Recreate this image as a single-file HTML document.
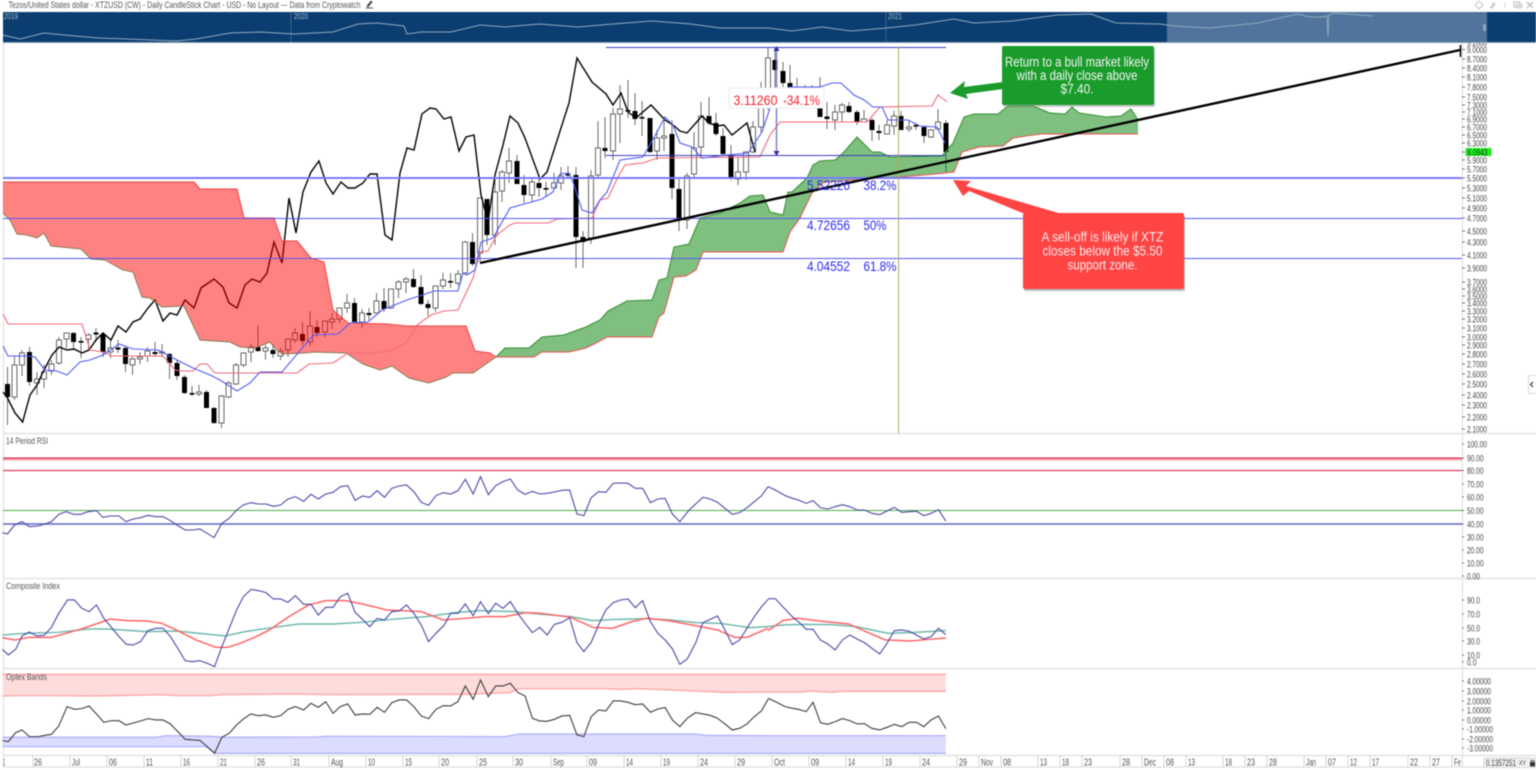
<!DOCTYPE html>
<html><head><meta charset="utf-8"><title>XTZUSD Daily Chart</title>
<style>
html,body{margin:0;padding:0;background:#fff;width:1536px;height:770px;overflow:hidden}
svg{display:block;position:absolute;left:0;top:0;filter:blur(.4px)}
text{font-family:"Liberation Sans",sans-serif}
.z polyline{vector-effect:non-scaling-stroke;fill:none}
.a text{font-size:9.5px;fill:#444}
.d text{font-size:10px;fill:#555}
</style></head><body>
<svg width="1536" height="770" viewBox="0 0 1536 770" xmlns="http://www.w3.org/2000/svg">
<rect width="1536" height="770" fill="#fff"/>
<!-- title -->
<text x="8.5" y="8" font-size="9.5" fill="#555" textLength="352" lengthAdjust="spacingAndGlyphs">Tezos/United States dollar - XTZUSD (CW) - Daily CandleStick Chart - USD - No Layout --- Data from Cryptowatch</text>
<path d="M366 8h7M367 6l4-5 1 1-4 5z" stroke="#555" stroke-width=".9" fill="#333"/>
<!-- window icons -->
<path d="M1479 1l4 4-4 4-4-4z" fill="none" stroke="#c4c4c4"/>
<path d="M1489 8l3-3 1-3 3 2-2 2-2 3-1-1z" fill="#c8c8c8"/>
<path d="M1505 2v6" stroke="#ddd"/>
<path d="M1514 2h6v5h-6z" fill="none" stroke="#c0c0c0"/><path d="M1516 4h6v4h-6z" fill="#ddd" stroke="#c0c0c0" stroke-width=".6"/>
<path d="M1527 2l6 6M1533 2l-6 6" stroke="#bbb" stroke-width="1.3"/>

<!-- borders -->
<path d="M3.5 42V767M1462.5 42V767" stroke="#dcdcdc" stroke-width="1"/>
<path d="M3 433.5H1536M3 578.5H1536M3 668.5H1536M3 755.5H1536M3 767H1536" stroke="#dedede" stroke-width="1.3"/>

<!-- wicks -->
<path fill="none" stroke="#6e6e6e" stroke-width="1" d="M7.5 367V425M14.5 356V400M22 350V376M29.5 347V386M37 372V395M44 365V388M51.5 360V375M59 337V365M66.5 333V348M73.5 332V350M81 337V358M88.5 333V350M96 328V342M103 333V357M110.5 340V358M118 340V353M125.5 347V372M132.5 357V375M140 352V364M147.5 347V362M155 342V357M162 344V357M169.5 353V379M177 360V380M184.5 375V394M192 386V396M199 385V396M206.5 390V408M214 407V424M221.5 395V428M228.5 381V398M236 363V385M243.5 352V367M251 344V362M258 326V352M265.5 345V360M273 344V358M280.5 348V360M288 339V357M295 328V343M302.5 322V345M310 311V346M317 320V337M325 321V337M332 313V329M339.5 308V323M347 294V313M354.5 298V322M362 309V328M369 308V320M376.5 293V313M384 288V312M391 289V309M398.5 280V298M406 277V293M413.5 269V288M421 275V305M428 300V316M435.5 286V312M443 273V289M450.5 273V288M458 270V286M465 241V275M472.5 233V266M480 198V262M487 199V245M495 173V245M502 170V202M509 148V183M517 155V184M524 175V203M532 178V202M539 178V197M546 182V197M554 173V190M561 167V190M568 166V178M576 167V268M583 231V268M591 170V244M598 121V177M605 117V158M613 108V160M620 85V143M628 80V118M635 93V125M642 101V136M650 118V153M657 130V160M664 117V151M672 120V199M679 178V231M687 173V229M694 132V178M701 102V157M709 97V125M716 113V136M723 128V155M731 145V180M738 157V185M746 152V180M753 121V153M761 82V132M768 48V110M775 47V88M783 62V87M790 65V95M797 78V100M805 85V100M812 85V100M820 77V117M827 102V129M835 105V130M842 103V122M849 102V113M857 110V125M864 110V122M872 118V141M879 125V140M887 120V134M894 111V135M901 111V130M909 120V132M916 123V130M924 127V143M931 129V138M938 109V130M946 120V172"/>
<!-- hollow bodies -->
<path fill="#fff" stroke="#666" stroke-width="1" d="M12 365h5V397h-5zM19.5 353h5V365h-5zM34.5 379h5V383h-5zM41.5 372h5V379h-5zM49 364h5V371h-5zM56.5 340h5V363h-5zM64 333h5V339h-5zM86 335h5V339h-5zM108 348h5V352h-5zM130 359h5V365h-5zM137.5 357h5V359h-5zM145 351h5V356h-5zM159.5 352h5V353h-5zM196.5 392h5V394h-5zM219 396h5V423h-5zM226 383h5V397h-5zM233.5 365h5V384h-5zM241 353h5V365h-5zM248.5 347h5V352h-5zM263 348h5V351h-5zM278 351h5V356h-5zM285.5 339h5V350h-5zM292.5 333h5V340h-5zM307.5 326h5V342h-5zM322.5 321h5V332h-5zM329.5 319h5V322h-5zM337 308h5V319h-5zM344.5 303h5V308h-5zM359.5 313h5V322h-5zM374 301h5V313h-5zM388.5 289h5V308h-5zM396 282h5V289h-5zM403.5 279h5V282h-5zM433 286h5V308h-5zM440.5 280h5V286h-5zM455.5 274h5V283h-5zM462.5 242h5V273h-5zM477.5 198h5V253h-5zM492.5 192h5V235h-5zM499.5 172h5V191h-5zM506.5 161h5V173h-5zM529.5 182h5V195h-5zM551.5 183h5V188h-5zM558.5 176h5V183h-5zM588.5 176h5V238h-5zM595.5 148h5V175h-5zM610.5 114h5V151h-5zM617.5 109h5V114h-5zM654.5 138h5V151h-5zM661.5 136h5V138h-5zM684.5 176h5V220h-5zM691.5 148h5V174h-5zM698.5 116h5V147h-5zM735.5 172h5V179h-5zM743.5 152h5V172h-5zM750.5 127h5V152h-5zM758.5 100h5V127h-5zM765.5 58h5V92h-5zM832.5 112h5V120h-5zM839.5 105h5V112h-5zM861.5 119h5V122h-5zM884.5 125h5V134h-5zM891.5 116h5V126h-5zM906.5 127h5V129h-5zM928.5 130h5V137h-5zM935.5 122h5V129h-5z"/>
<!-- filled bodies -->
<path fill="none" stroke="#000" stroke-width="5" d="M7.5 384V397M29.5 352V382M73.5 333V342M96 332.5V334.5M103 334V352M118 347.5V349.5M125.5 348V364M155 352V354M169.5 354V363M177 363V376M184.5 377V393M206.5 392V408M214 408V423M258 347V351M273 350V354M302.5 334V341M317 327V333M354.5 303V322M369 313V315M384 301V309M413.5 279V287M421 287V304M428 304V308M472.5 242V264M487 199V235M517 161V184M524 185V195M539 183V188M576 175V237M583 237V242M635 111V119M650 118V152M672 134V188M679 189V220M709 116V123M716 123V134M723 136V154M731 155V179M775 60V70M783 71V83M790 83V89M820 108V117M849 106V112M857 112V122M872 120V130M901 116V130M924 127V136M946 123V152"/>
<path fill="none" stroke="#000" stroke-width="5" d="M827 116.5V119M879 131V133"/>
<path fill="none" stroke="#000" stroke-width="5" d="M81 341V342.6M192 393V394.6M450.5 281V282.6M605 148V151M628 110V111.6M546 188V189.6M568 174V175.6M642 117V118.6M916 125V126.6"/>

<!-- chikou -->
<polyline fill="none" stroke="#000" stroke-width="1.4" points="3,392 7,397 15,413 22.6,422 30,395 37,385 44,370 52,355 59,347 67,350 74,349 82,353 89,350 96,340 103,333 111,340 118,326 126,332 133,322 140,319 148,308 155,300 163,321 170,313 177,315 185,300 194,308 201,288 214,279 223,287 229,303 237,308 245,285 252,279 260,282 267,273 274,242 282,263 289,198 296,233 303,192 311,172 319,161 326,183 333,194 341,182 348,188 355,188 363,183 370,174 377,174 385,235 392,240 400,173 407,148 414,150 422,114 430,108 436,109 444,119 451,117 459,151 466,137 474,135 481,195 488,222 495,175 503,145 510,116 518,123 525,138 540,179 547,172 569,103 577,58 592,82 606,94 613,105 621,93 628,112 636,118 651,105 665,120 673,125 680,131 687,133 702,116 709,123 717,126 724,125 732,135 747,123 755,152"/>

<!-- red cloud -->
<polygon fill="rgba(255,0,0,.49)" points="3,182 194,182 200,189 237,189 244,218 274,218 282,241 297,241 311,258 324,262 333,310 348,323 387,324 407,326 466,326 475,351 490,353 496,357 473,373 453,373 446,377 429,383 409,378 392,366 380,370 363,364 346,353 314,352 304,353 282,354 275,348 270,342 255,348 240,347 230,342 200,340 184,306 162,307 150,298 142,297 133,272 123,270 105,260 91,259 81,249 51,246 44,233 37,238 27,235 17,234 10,220 3,213"/>
<polyline fill="none" stroke="#f04040" stroke-width="1" points="3,182 194,182 200,189 237,189 244,218 274,218 282,241 297,241 311,258 324,262 333,310 348,323 387,324 407,326 466,326 475,351 490,353 496,357"/>
<polyline fill="none" stroke="#8a7a50" stroke-width="1" points="496,357 473,373 453,373 446,377 429,383 409,378 392,366 380,370 363,364 346,353 314,352 304,353 282,354 275,348 270,342 255,348 240,347 230,342 200,340 184,306 162,307 150,298 142,297 133,272 123,270 105,260 91,259 81,249 51,246 44,233 37,238 27,235 17,234 10,220 3,213"/>
<!-- green cloud -->
<polygon fill="rgba(0,128,0,.5)" points="496,357 505,348 529,348 542,337 564,335 586,327 600,320 608,311 627,301 652,300 659,280 667,278 674,247 689,244 700,218 720,213 740,203 750,196 763,195 770,212 783,215 788,192 792,192 807,178 813,165 820,161 835,160 843,153 857,137 872,152 880,152 890,157 942,156 953,143 964,117 974,114 998,114 1008,106 1033,106 1050,113 1065,114 1072,107 1079,113 1106,117 1121,116 1131,109 1138,120 1138,134 1040,134 1013,138 1003,146 979,147 962,152 954,172 935,174 900,177 824,182 812,193 800,218 790,232 783,252 703,252 696,270 686,276 674,277 664,313 659,317 652,337 607,337 596,343 586,348 569,352 542,352 534,357"/>
<polyline fill="none" stroke="#2f8f2f" stroke-width="1" points="496,357 505,348 529,348 542,337 564,335 586,327 600,320 608,311 627,301 652,300 659,280 667,278 674,247 689,244 700,218 720,213 740,203 750,196 763,195 770,212 783,215 788,192 792,192 807,178 813,165 820,161 835,160 843,153 857,137 872,152 880,152 890,157 942,156 953,143 964,117 974,114 998,114 1008,106 1033,106 1050,113 1065,114 1072,107 1079,113 1106,117 1121,116 1131,109 1138,120"/>
<polyline fill="none" stroke="#f05050" stroke-width="1" points="496,357 534,357 542,352 569,352 586,348 596,343 607,337 652,337 659,317 664,313 674,277 686,276 696,270 703,252 783,252 790,232 800,218 812,193 824,182 900,177 935,174 954,172 962,152 979,147 1003,146 1013,138 1040,134 1138,134"/>

<!-- kijun (red) -->
<polyline fill="none" stroke="#f36a7a" stroke-width="1.1" points="3,314 8,324 82,324 90,350 103,352 112,356 163,356 175,370 183,371 193,371 200,364 207,364 215,373 297,373 309,364 333,363 348,353 377,353 392,350 407,342 417,325 431,315 444,311 458,310 466,293 473,278 480,252 488,251 497,235 510,225 515,223 548,223 557,219 592,218 600,200 608,198 618,177 625,165 643,163 657,158 760,157 770,135 780,122 867,122 880,107 932,106 938,95 947,102"/>
<!-- tenkan (blue) -->
<polyline fill="none" stroke="#4f5cf5" stroke-width="1.1" points="3,346 8,356 27,356 35,357 45,370 57,371 67,375 80,362 90,360 103,355 119,344 133,349 158,350 177,360 193,368 210,375 220,380 237,391 250,383 260,372 282,372 309,340 314,335 338,334 350,323 368,322 382,310 407,300 434,291 458,291 463,273 467,275 475,270 481,242 493,238 510,208 542,199 553,192 560,174 569,173 573,182 582,210 592,213 600,200 607,192 620,160 643,157 657,132 665,117 673,125 680,143 692,147 702,158 727,155 748,153 762,132 770,108 775,92 790,87 820,87 832,83 841,83 854,95 864,100 873,107 882,107 888,120 908,120 920,126 937,127 945,143"/>

<!-- horizontal support levels -->
<path d="M3 178H1462" stroke="#8f8fff" stroke-width="2"/>
<path d="M3 178H1462" stroke="#5a5af5" stroke-width=".7"/>
<path d="M3 218.5H1462M3 258.5H1462" stroke="#5555f5" stroke-width="1.1"/>
<!-- measure -->
<path d="M606 47.5H946M606 155.5H946" stroke="#3d3dc4" stroke-width="1.1"/>
<path d="M776.5 47V155" stroke="#7676cc" stroke-width="1.4"/>
<path d="M776.5 46l-3 5h6zM776.5 156l-3-5h6z" fill="#2c2ca0"/>
<!-- yellow vline -->
<path d="M898.5 47V433" stroke="#b2aa55" stroke-width="1"/>
<!-- trend line -->
<path d="M480 263L1460 50" stroke="#000" stroke-width="2.4"/>
<path d="M1460.5 45V57" stroke="#000" stroke-width="1.6"/>

<!-- measure label -->
<rect x="729" y="88" width="95" height="20" fill="#fff" stroke="#ececec"/>
<text x="733.5" y="105" font-size="13.5" fill="#fb1f2c" textLength="44" lengthAdjust="spacingAndGlyphs">3.11260</text>
<text x="783" y="105" font-size="13.5" fill="#fb1f2c" textLength="37" lengthAdjust="spacingAndGlyphs">-34.1%</text>
<!-- fib labels -->
<g font-size="13.5" fill="#2a2af5">
<text x="807" y="190" textLength="43" lengthAdjust="spacingAndGlyphs">5.52226</text><text x="863.5" y="190" textLength="33" lengthAdjust="spacingAndGlyphs">38.2%</text>
<text x="807" y="230" textLength="43" lengthAdjust="spacingAndGlyphs">4.72656</text><text x="863.5" y="230" textLength="23" lengthAdjust="spacingAndGlyphs">50%</text>
<text x="807" y="271" textLength="43" lengthAdjust="spacingAndGlyphs">4.04552</text><text x="863.5" y="271" textLength="33" lengthAdjust="spacingAndGlyphs">61.8%</text>
</g>

<!-- arrows -->
<polygon fill="#1a9c2b" points="1003,82 964,87 965,81 950,93 968,99 966,94 1003,89"/>
<polygon fill="#ff4444" points="953,180 971,181 966,186 1062,214 1025,214 969,191 963,196"/>
<!-- callouts -->
<rect x="1003" y="48" width="152" height="59" rx="2" fill="#777" opacity=".4"/>
<rect x="1002" y="46" width="152" height="59" rx="2" fill="#1a9c2b"/>
<g font-size="13.5" fill="#f4f4f4" text-anchor="middle">
<text x="1077" y="66.5" textLength="144" lengthAdjust="spacingAndGlyphs">Return to a bull market likely</text>
<text x="1077" y="80" textLength="121" lengthAdjust="spacingAndGlyphs">with a daily close above</text>
<text x="1077" y="93.5" textLength="33" lengthAdjust="spacingAndGlyphs">$7.40.</text>
</g>
<rect x="1024" y="215" width="161" height="76" rx="2" fill="#666" opacity=".45"/>
<rect x="1023" y="213" width="161" height="76" rx="2" fill="#ff4444"/>
<g font-size="13.5" fill="#fbeaea" text-anchor="middle">
<text x="1102.5" y="241.5" textLength="122" lengthAdjust="spacingAndGlyphs">A sell-off is likely if XTZ</text>
<text x="1102.5" y="255.5" textLength="120" lengthAdjust="spacingAndGlyphs">closes below the $5.50</text>
<text x="1102.5" y="269.5" textLength="70" lengthAdjust="spacingAndGlyphs">support zone.</text>
</g>

<!-- RSI -->
<path d="M3 459.5H1462" stroke="#f6a3ae" stroke-width="2"/>
<path d="M3 458H1462M3 470.5H1462" stroke="#e2163c" stroke-width="1.1"/>
<path d="M3 510.5H1462" stroke="#4cae4c" stroke-width="1.1"/>
<path d="M3 524H1462" stroke="#a0a0de" stroke-width="2"/>
<path d="M3 524H1462" stroke="#6262c0" stroke-width=".8"/>
<text x="6" y="444" font-size="9.5" fill="#555" textLength="42" lengthAdjust="spacingAndGlyphs">14 Period RSI</text>
<text x="6" y="589" font-size="9.5" fill="#555" textLength="54" lengthAdjust="spacingAndGlyphs">Composite Index</text>

<!-- Optex fill -->
<g class="z" transform="translate(0 430) scale(.4898 .3333)">
<polygon fill="#ffdcdc" points="5,733 1568,733 1568,786 1480,787 1420,783 1300,776 1270,778 1230,776 1060,776 1040,788 950,793 680,794 600,792 450,794 430,797 360,797 330,794 200,798 100,797 40,797 5,798"/>
<polygon fill="#dcdcff" points="5,922 320,922 340,917 430,919 460,922 640,921 670,919 1030,920 1060,912 1420,912 1440,916 1568,917 1568,970 440,970 420,950 5,950"/>
<polyline stroke="#ffa2a2" stroke-width="1.3" points="5,733 1568,733"/>
<polyline stroke="#ffa2a2" stroke-width="1.3" points="5,798 40,797 100,797 200,798 330,794 360,797 430,797 450,794 600,792 680,794 950,793 1040,788 1060,776 1230,776 1270,778 1300,776 1420,783 1480,787 1568,786"/>
<polyline stroke="#b2b2fa" stroke-width="1.3" points="5,922 320,922 340,917 430,919 460,922 640,921 670,919 1030,920 1060,912 1420,912 1440,916 1568,917"/>
<polyline stroke="#b2b2fa" stroke-width="1.3" points="5,950 420,950 440,970 1568,970"/>

<!-- RSI line -->
<polyline stroke="#4a4aa8" stroke-width="1.1" points="5,308 15,312 30,285 45,275 60,290 78,288 92,282 105,275 120,253 135,245 150,253 165,253 180,245 197,242 210,262 225,258 243,258 257,275 272,267 287,263 302,256 318,260 333,260 348,272 363,287 378,300 393,300 408,297 423,310 437,323 453,280 468,265 483,240 497,225 512,218 527,222 543,222 558,229 573,225 588,207 603,200 620,214 635,193 650,207 665,192 680,187 695,170 710,167 725,211 740,198 755,202 770,182 785,202 800,175 815,168 830,165 845,185 860,217 875,226 890,197 905,188 920,192 935,182 950,148 966,192 981,140 997,194 1012,167 1027,155 1042,147 1057,180 1072,193 1087,184 1102,192 1117,190 1132,186 1147,181 1163,180 1178,252 1192,257 1207,203 1222,185 1237,187 1252,160 1267,159 1282,160 1297,175 1312,175 1328,218 1343,207 1358,205 1373,253 1388,275 1407,240 1435,202 1450,207 1465,217 1480,235 1495,253 1510,248 1525,233 1540,215 1555,197 1568,170"/>
<!-- composite teal -->
<polyline stroke="#6fb8ae" stroke-width="1.5" points="5,615 50,610 120,607 180,597 220,597 300,605 360,603 420,612 460,618 500,605 560,592 610,582 680,582 740,577 800,568 870,560 930,548 980,542 1050,545 1100,552 1165,560 1210,572 1260,568 1320,566 1370,570 1420,578 1470,580 1530,593 1568,590"/>
<!-- composite red -->
<polyline stroke="#ff6464" stroke-width="1.5" points="5,623 30,630 60,622 105,622 135,610 170,595 190,585 225,567 260,572 300,573 330,580 360,600 400,630 440,652 465,652 490,640 520,622 550,600 590,560 630,525 665,512 705,512 740,522 790,540 860,545 905,570 950,565 990,560 1030,560 1075,548 1105,550 1165,562 1210,592 1250,595 1290,575 1320,565 1365,572 1420,587 1465,600 1500,622 1525,622 1568,595"/>
<!-- composite blue -->
<polyline stroke="#4a4aa8" stroke-width="1.1" points="5,658 17,675 32,658 45,618 60,606 75,618 90,616 105,592 120,550 138,510 152,510 167,535 182,545 197,525 212,565 228,593 243,620 258,643 272,645 287,635 302,602 318,595 333,595 348,620 363,655 378,692 393,695 408,692 423,700 438,710 453,650 468,595 483,540 497,500 513,478 528,482 543,488 558,507 573,507 588,517 603,497 620,523 635,523 650,555 665,532 680,532 695,500 710,490 725,547 740,568 755,590 770,565 785,570 800,545 815,543 830,525 845,550 860,585 875,635 890,610 907,585 920,550 935,550 950,522 966,557 981,515 997,551 1012,520 1027,535 1042,515 1057,550 1072,580 1087,608 1102,592 1117,615 1132,583 1147,577 1163,563 1178,638 1192,665 1207,637 1222,585 1237,540 1252,518 1267,510 1282,507 1297,533 1312,512 1328,575 1343,610 1358,630 1373,657 1388,703 1403,687 1420,640 1435,578 1450,568 1465,558 1480,600 1495,644 1510,630 1525,595 1540,560 1555,530 1568,508"/>
<!-- optex black -->
<polyline stroke="#3e3e3e" stroke-width="1.1" points="5,932 17,935 32,908 45,900 60,920 78,920 92,916 105,913 120,888 137,830 152,838 167,836 182,828 197,852 212,877 228,872 243,872 257,885 272,879 287,873 302,866 318,870 333,870 348,882 363,905 378,928 393,930 408,931 423,950 438,970 453,922 468,910 483,885 497,867 512,852 527,857 543,855 558,862 573,857 588,838 603,830 620,840 635,820 650,832 665,815 680,850 695,830 710,822 725,855 740,852 755,853 770,832 785,847 800,818 815,810 830,810 845,830 860,858 875,866 890,838 905,827 920,828 935,815 950,768 966,808 981,750 997,800 1012,768 1027,768 1042,760 1057,787 1072,798 1087,865 1102,873 1117,874 1132,868 1147,858 1163,856 1178,915 1192,920 1207,860 1222,840 1237,843 1252,813 1267,813 1282,817 1297,824 1312,822 1328,847 1343,837 1358,833 1373,870 1388,890 1403,865 1420,848 1435,852 1450,856 1465,865 1480,882 1495,900 1510,895 1525,882 1540,860 1555,842 1568,808"/>
</g>
<g class="z" transform="translate(768 430) scale(.4898 .3333)">
<polygon fill="#ffdcdc" points="0,733 363,733 363,784 150,784 130,787 90,783 70,786 0,786"/>
<polygon fill="#dcdcff" points="0,917 363,917 363,970 0,970"/>
<polyline stroke="#ffa2a2" stroke-width="1.3" points="0,733 363,733"/>
<polyline stroke="#ffa2a2" stroke-width="1.3" points="0,786 70,786 90,783 130,787 150,784 363,784"/>
<polyline stroke="#b2b2fa" stroke-width="1.3" points="0,917 363,917"/>
<polyline stroke="#b2b2fa" stroke-width="1.3" points="0,970 363,970"/>
<polyline stroke="#4a4aa8" stroke-width="1.1" points="0,170 15,180 35,197 50,205 62,210 78,220 92,212 107,233 122,237 137,230 152,224 167,230 182,240 197,240 212,250 228,254 243,243 258,232 273,247 288,245 303,244 318,257 333,250 348,239 363,273"/>
<polyline stroke="#6fb8ae" stroke-width="1.5" points="0,590 30,585 70,583 130,584 180,590 245,610 300,607 363,602"/>
<polyline stroke="#ff6464" stroke-width="1.5" points="0,602 30,572 60,565 105,573 165,582 200,605 240,630 290,633 330,628 363,624"/>
<polyline stroke="#4a4aa8" stroke-width="1.1" points="0,506 15,506 30,530 48,558 62,575 78,598 92,598 107,630 122,642 137,660 152,630 167,615 182,627 197,638 212,655 228,672 243,640 258,602 273,600 288,604 303,615 318,627 333,620 348,595 363,614"/>
<polyline stroke="#3e3e3e" stroke-width="1.1" points="0,805 15,815 35,830 50,835 62,838 78,845 92,817 107,878 122,883 137,875 152,866 167,872 182,882 197,881 212,895 228,900 243,892 258,883 273,890 288,877 303,877 318,890 333,870 348,858 363,896"/>
</g>
<text x="6" y="680" font-size="9.5" fill="#555" textLength="41" lengthAdjust="spacingAndGlyphs">Optex Bands</text>

<!-- axis ticks -->
<path stroke="#777" stroke-width="1" d="M1462 49.5h3M1462 59h3M1462 68h3M1462 77h3M1462 87h3M1462 97h3M1462 105h3M1462 112h3M1462 119h3M1462 127h3M1462 135h3M1462 143h3M1462 152h3M1462 160h3M1462 169h3M1462 178h3M1462 188h3M1462 198h3M1462 208h3M1462 218h3M1462 231h3M1462 242h3M1462 255h3M1462 268h3M1462 282h3M1462 289h3M1462 296h3M1462 303h3M1462 311h3M1462 319h3M1462 328h3M1462 337h3M1462 345h3M1462 354h3M1462 364h3M1462 374h3M1462 384h3M1462 395h3M1462 405h3M1462 417h3M1462 429h3M1462 444h2M1462 458h2M1462 470.5h2M1462 484h2M1462 497h2M1462 510.5h2M1462 524h2M1462 537h2M1462 550h2M1462 563h2M1462 576h2M1462 600h2M1462 614h2M1462 628h2M1462 641h2M1462 655h2M1462 662h2M1462 681h2M1462 691h2M1462 701h2M1462 710h2M1462 720h2M1462 729h2M1462 739h2M1462 748h2"/>
<!-- price labels -->
<g class="a">
<text x="1467" y="46" textLength="20" lengthAdjust="spacingAndGlyphs">9.2000</text>
<text x="1467" y="53" textLength="20" lengthAdjust="spacingAndGlyphs">9.0000</text>
<text x="1467" y="62.5" textLength="20" lengthAdjust="spacingAndGlyphs">8.7000</text>
<text x="1467" y="71.5" textLength="20" lengthAdjust="spacingAndGlyphs">8.4000</text>
<text x="1467" y="80.5" textLength="20" lengthAdjust="spacingAndGlyphs">8.1000</text>
<text x="1467" y="90.5" textLength="20" lengthAdjust="spacingAndGlyphs">7.8000</text>
<text x="1467" y="100.5" textLength="20" lengthAdjust="spacingAndGlyphs">7.5000</text>
<text x="1467" y="108.5" textLength="20" lengthAdjust="spacingAndGlyphs">7.3000</text>
<text x="1467" y="115.5" textLength="20" lengthAdjust="spacingAndGlyphs">7.1000</text>
<text x="1467" y="122.5" textLength="20" lengthAdjust="spacingAndGlyphs">6.9000</text>
<text x="1467" y="130.5" textLength="20" lengthAdjust="spacingAndGlyphs">6.7000</text>
<text x="1467" y="138.5" textLength="20" lengthAdjust="spacingAndGlyphs">6.5000</text>
<text x="1467" y="146.5" textLength="20" lengthAdjust="spacingAndGlyphs">6.3000</text>
<rect x="1465.5" y="148" width="26" height="8" fill="#22ee22"/>
<text x="1467.5" y="155.5" textLength="20" lengthAdjust="spacingAndGlyphs" style="fill:#1a3a1a">6.0943</text>
<text x="1467" y="163.5" textLength="20" lengthAdjust="spacingAndGlyphs">5.9000</text>
<text x="1467" y="172.5" textLength="20" lengthAdjust="spacingAndGlyphs">5.7000</text>
<text x="1467" y="181.5" textLength="20" lengthAdjust="spacingAndGlyphs">5.5000</text>
<text x="1467" y="191.5" textLength="20" lengthAdjust="spacingAndGlyphs">5.3000</text>
<text x="1467" y="201.5" textLength="20" lengthAdjust="spacingAndGlyphs">5.1000</text>
<text x="1467" y="211.5" textLength="20" lengthAdjust="spacingAndGlyphs">4.9000</text>
<text x="1467" y="221.5" textLength="20" lengthAdjust="spacingAndGlyphs">4.7000</text>
<text x="1467" y="234.5" textLength="20" lengthAdjust="spacingAndGlyphs">4.5000</text>
<text x="1467" y="245.5" textLength="20" lengthAdjust="spacingAndGlyphs">4.3000</text>
<text x="1467" y="258.5" textLength="20" lengthAdjust="spacingAndGlyphs">4.1000</text>
<text x="1467" y="271.5" textLength="20" lengthAdjust="spacingAndGlyphs">3.9000</text>
<text x="1467" y="285.5" textLength="20" lengthAdjust="spacingAndGlyphs">3.7000</text>
<text x="1467" y="292.5" textLength="20" lengthAdjust="spacingAndGlyphs">3.6000</text>
<text x="1467" y="299.5" textLength="20" lengthAdjust="spacingAndGlyphs">3.5000</text>
<text x="1467" y="306.5" textLength="20" lengthAdjust="spacingAndGlyphs">3.4000</text>
<text x="1467" y="314.5" textLength="20" lengthAdjust="spacingAndGlyphs">3.3000</text>
<text x="1467" y="322.5" textLength="20" lengthAdjust="spacingAndGlyphs">3.2000</text>
<text x="1467" y="331.5" textLength="20" lengthAdjust="spacingAndGlyphs">3.1000</text>
<text x="1467" y="340.5" textLength="20" lengthAdjust="spacingAndGlyphs">3.0000</text>
<text x="1467" y="348.5" textLength="20" lengthAdjust="spacingAndGlyphs">2.9000</text>
<text x="1467" y="357.5" textLength="20" lengthAdjust="spacingAndGlyphs">2.8000</text>
<text x="1467" y="367.5" textLength="20" lengthAdjust="spacingAndGlyphs">2.7000</text>
<text x="1467" y="377.5" textLength="20" lengthAdjust="spacingAndGlyphs">2.6000</text>
<text x="1467" y="387.5" textLength="20" lengthAdjust="spacingAndGlyphs">2.5000</text>
<text x="1467" y="398.5" textLength="20" lengthAdjust="spacingAndGlyphs">2.4000</text>
<text x="1467" y="408.5" textLength="20" lengthAdjust="spacingAndGlyphs">2.3000</text>
<text x="1467" y="420.5" textLength="20" lengthAdjust="spacingAndGlyphs">2.2000</text>
<text x="1467" y="432.5" textLength="20" lengthAdjust="spacingAndGlyphs">2.1000</text>
<!-- RSI axis -->
<text x="1467" y="447.5" textLength="20" lengthAdjust="spacingAndGlyphs">100.00</text>
<text x="1467" y="461.5" textLength="16.5" lengthAdjust="spacingAndGlyphs">90.00</text>
<text x="1467" y="474" textLength="16.5" lengthAdjust="spacingAndGlyphs">80.00</text>
<text x="1467" y="487.5" textLength="16.5" lengthAdjust="spacingAndGlyphs">70.00</text>
<text x="1467" y="500.5" textLength="16.5" lengthAdjust="spacingAndGlyphs">60.00</text>
<text x="1467" y="514" textLength="16.5" lengthAdjust="spacingAndGlyphs">50.00</text>
<text x="1467" y="527.5" textLength="16.5" lengthAdjust="spacingAndGlyphs">40.00</text>
<text x="1467" y="540.5" textLength="16.5" lengthAdjust="spacingAndGlyphs">30.00</text>
<text x="1467" y="553.5" textLength="16.5" lengthAdjust="spacingAndGlyphs">20.00</text>
<text x="1467" y="566.5" textLength="16.5" lengthAdjust="spacingAndGlyphs">10.00</text>
<text x="1467" y="579.5" textLength="13" lengthAdjust="spacingAndGlyphs">0.00</text>
<!-- composite axis -->
<text x="1467" y="603.5" textLength="13" lengthAdjust="spacingAndGlyphs">90.0</text>
<text x="1467" y="617.5" textLength="13" lengthAdjust="spacingAndGlyphs">70.0</text>
<text x="1467" y="631.5" textLength="13" lengthAdjust="spacingAndGlyphs">50.0</text>
<text x="1467" y="644.5" textLength="13" lengthAdjust="spacingAndGlyphs">30.0</text>
<text x="1467" y="658.5" textLength="13" lengthAdjust="spacingAndGlyphs">10.0</text>
<text x="1467" y="665.5" textLength="9.5" lengthAdjust="spacingAndGlyphs">0.0</text>
<!-- optex axis -->
<text x="1467" y="684.5" textLength="24" lengthAdjust="spacingAndGlyphs">4.00000</text>
<text x="1467" y="694.5" textLength="24" lengthAdjust="spacingAndGlyphs">3.00000</text>
<text x="1467" y="704.5" textLength="24" lengthAdjust="spacingAndGlyphs">2.00000</text>
<text x="1467" y="713.5" textLength="24" lengthAdjust="spacingAndGlyphs">1.00000</text>
<text x="1467" y="723.5" textLength="24" lengthAdjust="spacingAndGlyphs">0.00000</text>
<text x="1467" y="732.5" textLength="26" lengthAdjust="spacingAndGlyphs">-1.00000</text>
<text x="1467" y="742.5" textLength="26" lengthAdjust="spacingAndGlyphs">-2.00000</text>
<text x="1467" y="751.5" textLength="26" lengthAdjust="spacingAndGlyphs">-3.00000</text>
</g>
<!-- date ticks -->
<path stroke="#d4d4d4" stroke-width="1" d="M33 755v12M70 755v12M107 755v12M144 755v12M181 755v12M218 755v12M255 755v12M291 755v12M329 755v12M366 755v12M403 755v12M439 755v12M477 755v12M513 755v12M551 755v12M587 755v12M624 755v12M661 755v12M698 755v12M735 755v12M772 755v12M809 755v12M846 755v12M883 755v12M920 755v12M957 755v12M979 755v12M1001 755v12M1038 755v12M1060 755v12M1082 755v12M1120 755v12M1142 755v12M1164 755v12M1186 755v12M1223 755v12M1245 755v12M1267 755v12M1304 755v12M1326 755v12M1348 755v12M1370 755v12M1408 755v12M1430 755v12M1452 755v12"/>
<!-- date labels -->
<g class="d">
<text x="3" y="765.5" textLength="2" lengthAdjust="spacingAndGlyphs">1</text>
<text x="34" y="765.5" textLength="8" lengthAdjust="spacingAndGlyphs">26</text>
<text x="72" y="765.5" textLength="8" lengthAdjust="spacingAndGlyphs">Jul</text>
<text x="109" y="765.5" textLength="8" lengthAdjust="spacingAndGlyphs">06</text>
<text x="146" y="765.5" textLength="7" lengthAdjust="spacingAndGlyphs">11</text>
<text x="183" y="765.5" textLength="7" lengthAdjust="spacingAndGlyphs">16</text>
<text x="220" y="765.5" textLength="7" lengthAdjust="spacingAndGlyphs">21</text>
<text x="257" y="765.5" textLength="8" lengthAdjust="spacingAndGlyphs">26</text>
<text x="293" y="765.5" textLength="7" lengthAdjust="spacingAndGlyphs">31</text>
<text x="331" y="765.5" textLength="12" lengthAdjust="spacingAndGlyphs">Aug</text>
<text x="368" y="765.5" textLength="7" lengthAdjust="spacingAndGlyphs">10</text>
<text x="405" y="765.5" textLength="7" lengthAdjust="spacingAndGlyphs">15</text>
<text x="441" y="765.5" textLength="8" lengthAdjust="spacingAndGlyphs">20</text>
<text x="479" y="765.5" textLength="8" lengthAdjust="spacingAndGlyphs">25</text>
<text x="515" y="765.5" textLength="8" lengthAdjust="spacingAndGlyphs">30</text>
<text x="553" y="765.5" textLength="11" lengthAdjust="spacingAndGlyphs">Sep</text>
<text x="589" y="765.5" textLength="8" lengthAdjust="spacingAndGlyphs">09</text>
<text x="626" y="765.5" textLength="7" lengthAdjust="spacingAndGlyphs">14</text>
<text x="663" y="765.5" textLength="7" lengthAdjust="spacingAndGlyphs">19</text>
<text x="700" y="765.5" textLength="8" lengthAdjust="spacingAndGlyphs">24</text>
<text x="737" y="765.5" textLength="8" lengthAdjust="spacingAndGlyphs">29</text>
<text x="774" y="765.5" textLength="11" lengthAdjust="spacingAndGlyphs">Oct</text>
<text x="811" y="765.5" textLength="8" lengthAdjust="spacingAndGlyphs">09</text>
<text x="848" y="765.5" textLength="7" lengthAdjust="spacingAndGlyphs">14</text>
<text x="885" y="765.5" textLength="7" lengthAdjust="spacingAndGlyphs">19</text>
<text x="922" y="765.5" textLength="8" lengthAdjust="spacingAndGlyphs">24</text>
<text x="959" y="765.5" textLength="8" lengthAdjust="spacingAndGlyphs">29</text>
<text x="981" y="765.5" textLength="12" lengthAdjust="spacingAndGlyphs">Nov</text>
<text x="1003" y="765.5" textLength="8" lengthAdjust="spacingAndGlyphs">08</text>
<text x="1040" y="765.5" textLength="7" lengthAdjust="spacingAndGlyphs">13</text>
<text x="1062" y="765.5" textLength="7" lengthAdjust="spacingAndGlyphs">18</text>
<text x="1084" y="765.5" textLength="8" lengthAdjust="spacingAndGlyphs">23</text>
<text x="1122" y="765.5" textLength="8" lengthAdjust="spacingAndGlyphs">28</text>
<text x="1144" y="765.5" textLength="12" lengthAdjust="spacingAndGlyphs">Dec</text>
<text x="1166" y="765.5" textLength="8" lengthAdjust="spacingAndGlyphs">08</text>
<text x="1188" y="765.5" textLength="7" lengthAdjust="spacingAndGlyphs">13</text>
<text x="1225" y="765.5" textLength="7" lengthAdjust="spacingAndGlyphs">18</text>
<text x="1247" y="765.5" textLength="8" lengthAdjust="spacingAndGlyphs">23</text>
<text x="1269" y="765.5" textLength="8" lengthAdjust="spacingAndGlyphs">28</text>
<text x="1306" y="765.5" textLength="10" lengthAdjust="spacingAndGlyphs">Jan</text>
<text x="1328" y="765.5" textLength="8" lengthAdjust="spacingAndGlyphs">07</text>
<text x="1350" y="765.5" textLength="7" lengthAdjust="spacingAndGlyphs">12</text>
<text x="1372" y="765.5" textLength="7" lengthAdjust="spacingAndGlyphs">17</text>
<text x="1410" y="765.5" textLength="8" lengthAdjust="spacingAndGlyphs">22</text>
<text x="1432" y="765.5" textLength="8" lengthAdjust="spacingAndGlyphs">27</text>
<text x="1454" y="765.5" textLength="7" lengthAdjust="spacingAndGlyphs">Fe</text>
</g>
<!-- bottom right -->
<rect x="1484" y="758" width="52" height="9.5" fill="#f1f1f1" stroke="#d8d8d8"/>
<text x="1486" y="766" font-size="9.5" fill="#444" textLength="30" lengthAdjust="spacingAndGlyphs">0.1357251</text>
<text x="1519" y="765" font-size="6.5" fill="#444" textLength="7" lengthAdjust="spacingAndGlyphs">XY</text>
<rect x="1530" y="762" width="5" height="4.5" fill="#333"/>
<path d="M1531 762v-1.5h3v1.5" fill="none" stroke="#333" stroke-width=".8"/>
<!-- side tab -->
<rect x="1528.5" y="375.5" width="8" height="18" fill="#fff" stroke="#d8d8d8"/>
<path d="M1533 382l-2.5 2.5 2.5 2.5" fill="none" stroke="#333" stroke-width="1.2"/>

<!-- navigator (drawn last so it clips the top axis label) -->
<rect x="3" y="12" width="1533" height="30" fill="#0b3d70"/>
<rect x="1167" y="12" width="320" height="30" fill="#50749b"/>
<path d="M291 12v30M886 12v30" stroke="#3a638d" stroke-width="1"/>
<polyline fill="none" stroke="#92a9c0" stroke-width="1" points="3,35 20,39 44,33 64,35 98,38 127,39 176,41 196,39 230,33 260,32 294,34 333,32 358,24 377,23 404,26 407,34 421,32 451,32 480,25 505,27 539,24 578,27 613,24 652,21 691,24 720,28 768,28 792,31 822,27 851,31 886,28 915,25 954,19 974,23 1013,21 1057,15 1091,14 1116,23 1160,24 1175,26 1209,28 1258,23 1297,14 1310,17 1322,17 1327,16 1328,36 1329,15 1334,13 1373,16"/>
<text x="4" y="19" font-size="8" fill="#a6b8ca" textLength="14" lengthAdjust="spacingAndGlyphs">2019</text>
<text x="294" y="19" font-size="8" fill="#a6b8ca" textLength="14" lengthAdjust="spacingAndGlyphs">2020</text>
<text x="888" y="19" font-size="8" fill="#a6b8ca" textLength="14" lengthAdjust="spacingAndGlyphs">2021</text>
<rect x="1483" y="24" width="3" height="7" fill="#8da3bb"/>
<path d="M3 42.5H1536" stroke="#8aa0b6" stroke-width="1"/>
</svg>
</body></html>
